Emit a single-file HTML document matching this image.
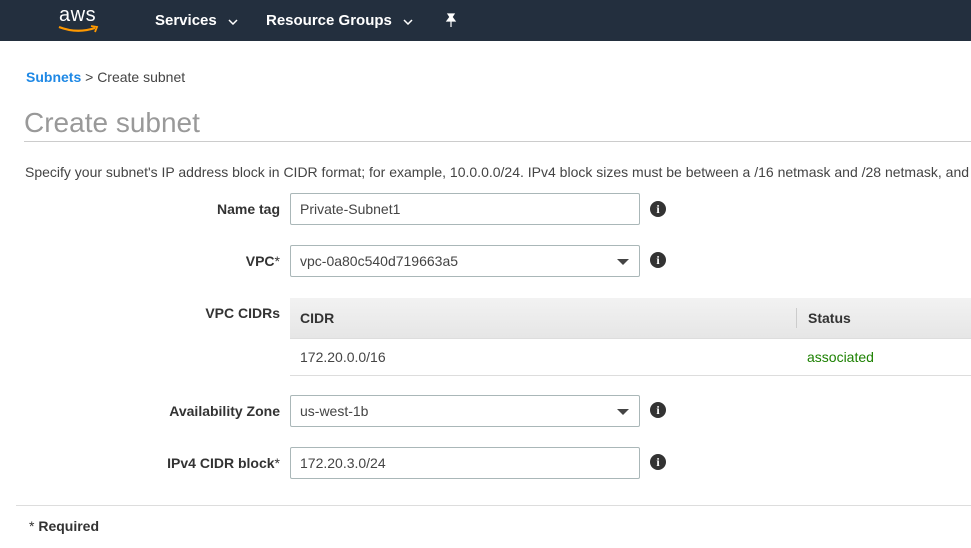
<!DOCTYPE html>
<html><head><style>
*{box-sizing:border-box}
body{margin:0;width:971px;height:548px;overflow:hidden;background:#fff;font-family:"Liberation Sans",Arial,sans-serif;color:#444;position:relative;font-size:14px}
.nav{position:absolute;left:0;top:0;width:971px;height:41px;background:#232f3e}
.nav .t{position:absolute;top:12px;color:#fff;font-weight:bold;font-size:15px}
.a{position:absolute}
.lbl{position:absolute;right:691px;font-weight:bold;font-size:14px;color:#333;text-align:right}
.inp{position:absolute;left:290px;width:350px;height:32px;border:1px solid #aab7b8;border-radius:2px;font-size:14px;color:#444;padding:7px 9px}
.info{position:absolute;left:650px;width:16px;height:16px;border-radius:50%;background:#333;color:#fff;font-size:12px;font-weight:bold;font-family:"Liberation Serif",serif;text-align:center;line-height:16px}
.caret{position:absolute;right:10px;top:13px;width:0;height:0;border-left:6px solid transparent;border-right:6px solid transparent;border-top:6px solid #444}
</style></head><body>
<div class="nav">
<div class="a" style="left:59px;top:4px;color:#fff;font-size:20px;letter-spacing:0.5px">aws</div>
<svg class="a" style="left:57px;top:25px" width="44" height="10"><path d="M2 2 Q20 9 38 3" stroke="#f90" stroke-width="2.2" fill="none"/><path d="M34 1 L40 2 L38 7" stroke="#f90" stroke-width="1.8" fill="none"/></svg>
<div class="t" style="left:155px">Services</div>
<svg class="a" style="left:228px;top:19px" width="10" height="6"><path d="M1 1 L5 5 L9 1" stroke="#fff" stroke-width="1.5" fill="none"/></svg>
<div class="t" style="left:266px">Resource Groups</div>
<svg class="a" style="left:403px;top:19px" width="10" height="6"><path d="M1 1 L5 5 L9 1" stroke="#fff" stroke-width="1.5" fill="none"/></svg>
<svg class="a" style="left:444px;top:13px" width="14" height="15"><path d="M4 1 L10 1 L8 4 L11 8 L3 8 L6 4 Z M7 8 L7 14" stroke="#fff" fill="#fff" stroke-width="1.2"/></svg>
</div>
<div class="a" style="left:26px;top:69px;font-size:14px;color:#444"><b style="color:#1e88e5">Subnets</b> &gt; Create subnet</div>
<div class="a" style="left:24px;top:107px;font-size:28px;color:#999">Create subnet</div>
<div class="a" style="left:24px;top:141px;width:947px;height:1px;background:#ccc"></div>
<div class="a" style="left:25px;top:164px;font-size:14px;color:#444;white-space:nowrap">Specify your subnet's IP address block in CIDR format; for example, 10.0.0.0/24. IPv4 block sizes must be between a /16 netmask and /28 netmask, and</div>
<div class="lbl" style="top:201px">Name tag</div>
<div class="inp" style="top:193px">Private-Subnet1</div>
<div class="info" style="top:201px">i</div>
<div class="lbl" style="top:253px">VPC<span style="font-weight:normal">*</span></div>
<div class="inp" style="top:245px">vpc-0a80c540d719663a5<div class="caret"></div></div>
<div class="info" style="top:252px">i</div>
<div class="lbl" style="top:305px">VPC CIDRs</div>
<div class="a" style="left:290px;top:298px;width:681px;height:41px;background:linear-gradient(#f2f2f2,#e6e6e6);border-bottom:1px solid #ddd"></div>
<div class="a" style="left:300px;top:310px;font-size:14px;font-weight:bold;color:#333">CIDR</div>
<div class="a" style="left:796px;top:308px;width:1px;height:20px;background:#ccc"></div>
<div class="a" style="left:808px;top:310px;font-size:14px;font-weight:bold;color:#333">Status</div>
<div class="a" style="left:300px;top:349px;font-size:14px">172.20.0.0/16</div>
<div class="a" style="left:807px;top:349px;font-size:14px;color:#1d8102">associated</div>
<div class="a" style="left:290px;top:375px;width:681px;height:1px;background:#ddd"></div>
<div class="lbl" style="top:403px">Availability Zone</div>
<div class="inp" style="top:395px">us-west-1b<div class="caret"></div></div>
<div class="info" style="top:402px">i</div>
<div class="lbl" style="top:455px">IPv4 CIDR block<span style="font-weight:normal">*</span></div>
<div class="inp" style="top:447px">172.20.3.0/24</div>
<div class="info" style="top:454px">i</div>
<div class="a" style="left:16px;top:505px;width:955px;height:1px;background:#ddd"></div>
<div class="a" style="left:29px;top:518px;font-size:14px;color:#333;font-weight:bold"><span style="font-weight:normal">*</span> Required</div>
</body></html>
